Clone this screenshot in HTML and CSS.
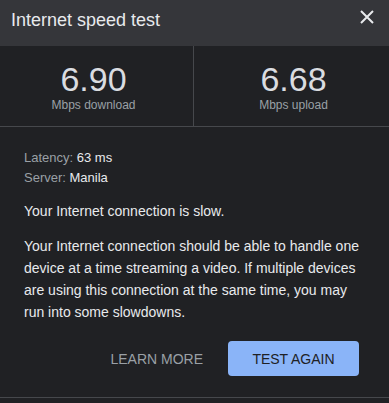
FILE: index.html
```html
<!DOCTYPE html>
<html>
<head>
<meta charset="utf-8">
<link rel="stylesheet" href="styles.css">
</head>
<body>
<div class="dialog">
  <div class="header">
    <div class="title">Internet speed test</div>
    <button class="close" aria-label="Close">
      <svg width="14" height="14" viewBox="0 0 14 14"><path d="M1 1L13 13M13 1L1 13" stroke="#e8eaed" stroke-width="2" fill="none"/></svg>
    </button>
  </div>
  <div class="stats">
    <div class="stat stat-left">
      <div class="value">6.90</div>
      <div class="unit">Mbps download</div>
    </div>
    <div class="stat stat-right">
      <div class="value">6.68</div>
      <div class="unit">Mbps upload</div>
    </div>
  </div>
  <div class="content">
    <div class="meta"><span class="label">Latency:</span> 63 ms</div>
    <div class="meta"><span class="label">Server:</span> Manila</div>
    <p class="summary">Your Internet connection is slow.</p>
    <p class="desc">Your Internet connection should be able to handle one device at a time streaming a video. If multiple devices are using this connection at the same time, you may run into some slowdowns.</p>
  </div>
  <div class="actions">
    <button class="btn-text">LEARN MORE</button>
    <button class="btn-primary">TEST AGAIN</button>
  </div>
</div>
</body>
</html>
```
FILE: styles.css
```css
html, body {
  margin: 0;
  padding: 0;
  background: #202124;
}
body {
  font-family: "Liberation Sans", Arial, sans-serif;
  color: #e8eaed;
  width: 389px;
  height: 403px;
  overflow: hidden;
}
.dialog {
  display: flex;
  flex-direction: column;
}
.header {
  height: 46px;
  box-sizing: border-box;
  background: #35363a;
  display: flex;
  align-items: flex-start;
  justify-content: space-between;
  padding: 8px 15px 0 11px;
}
.title {
  font-size: 18px;
  line-height: 24px;
  color: #e8eaed;
}
.close {
  background: none;
  border: 0;
  padding: 0;
  margin-top: 2px;
  width: 14px;
  height: 14px;
  display: flex;
}
.stats {
  display: grid;
  grid-template-columns: 194px 1fr;
  border-bottom: 1px solid #46484c;
}
.stat {
  text-align: center;
  padding: 15px 0 13px;
}
.stat-left {
  border-right: 1px solid #46484c;
  padding-right: 6px;
}
.stat-right {
  padding-left: 4px;
}
.value {
  font-size: 34px;
  line-height: 36px;
  color: #dadce0;
}
.unit {
  font-size: 12px;
  line-height: 16px;
  color: #9aa0a6;
}
.content {
  padding: 21px 24px 0 24px;
}
.meta {
  font-size: 13px;
  line-height: 20px;
  color: #e8eaed;
}
.label {
  color: #9aa0a6;
}
.summary {
  margin: 12px 0 0;
  font-size: 14px;
  line-height: 22px;
}
.desc {
  margin: 13px 0 0;
  font-size: 14px;
  line-height: 22px;
}
.actions {
  display: flex;
  justify-content: flex-end;
  align-items: center;
  gap: 25px;
  padding: 18px 30px 21px 0;
  border-bottom: 1px solid #46484c;
}
.btn-text {
  background: none;
  border: 0;
  padding: 0;
  font-family: inherit;
  font-size: 14px;
  color: #9aa0a6;
}
.btn-primary {
  background: #8ab4f8;
  border: 0;
  border-radius: 4px;
  width: 131px;
  height: 35px;
  padding: 0;
  font-family: inherit;
  font-size: 14px;
  color: #202124;
}
```
